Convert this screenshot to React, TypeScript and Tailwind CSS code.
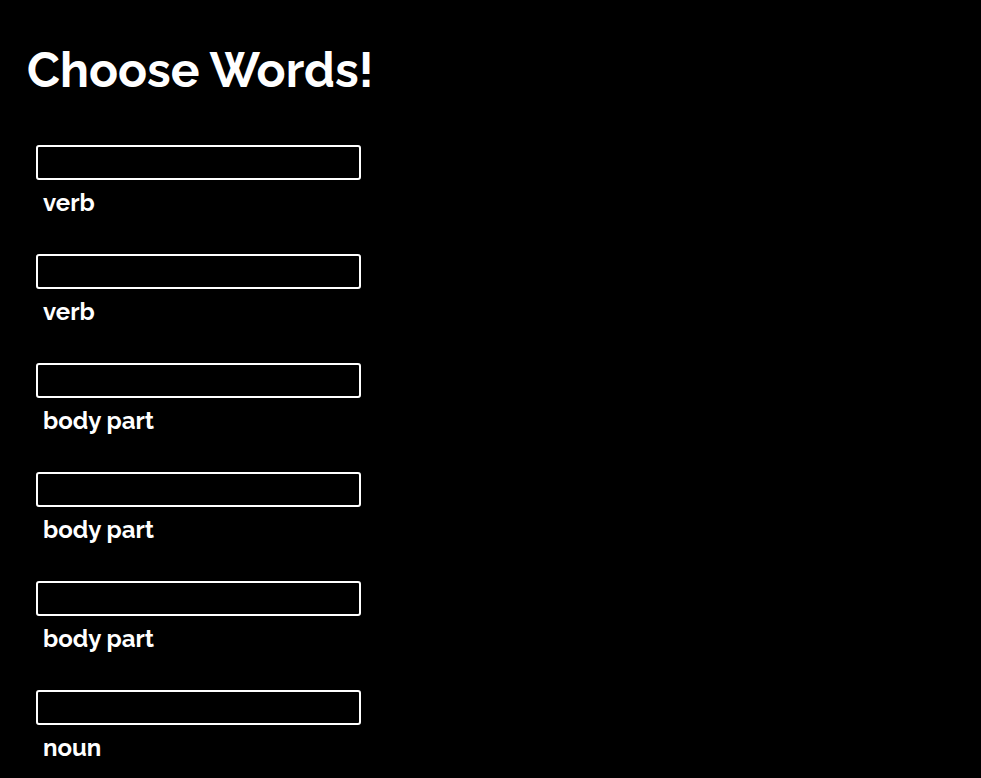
const fields = ["verb", "verb", "body part", "body part", "body part", "noun"]

export default function App() {
  return (
    <div className="min-h-screen bg-black text-white font-['Raleway',sans-serif] px-[27px] pt-[40px]">
      <h1 className="text-[48px] font-bold leading-[60px]">Choose Words!</h1>
      <div className="flex flex-col mt-[45px] pl-[9px]">
        {fields.map((f, i) => (
          <div key={i} className="flex flex-col h-[109px]">
            <input
              type="text"
              className="w-[325px] h-[35px] bg-black border-2 border-white rounded-[3px] outline-none"
            />
            <label className="pl-[7px] pt-[9px] text-[24px] font-bold leading-[28px]">{f}</label>
          </div>
        ))}
      </div>
    </div>
  )
}
